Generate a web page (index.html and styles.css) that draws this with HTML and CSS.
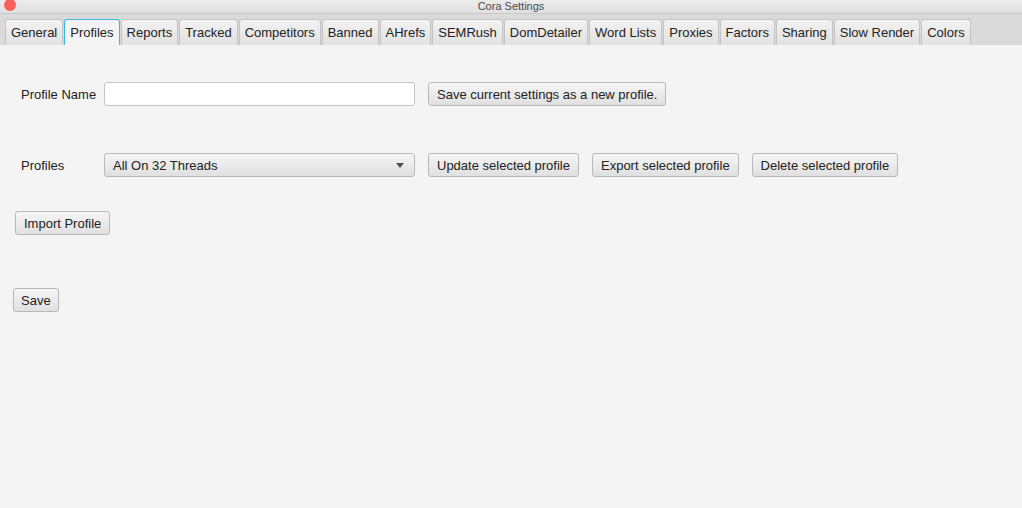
FILE: index.html
```html
<!DOCTYPE html>
<html lang="en">
<head>
    <meta charset="utf-8" />
    <title>Cora Settings</title>
    <link rel="stylesheet" href="styles.css">
</head>
<body>

    <div id="window">

        <div id="titleBar">
            <span class="closeDot"></span>
            <span class="titleText">Cora Settings</span>
        </div>

        <div id="tabBar">
            <div class="tab">General</div>
            <div class="tab selected">Profiles</div>
            <div class="tab">Reports</div>
            <div class="tab">Tracked</div>
            <div class="tab">Competitors</div>
            <div class="tab">Banned</div>
            <div class="tab">AHrefs</div>
            <div class="tab">SEMRush</div>
            <div class="tab">DomDetailer</div>
            <div class="tab">Word Lists</div>
            <div class="tab">Proxies</div>
            <div class="tab">Factors</div>
            <div class="tab">Sharing</div>
            <div class="tab">Slow Render</div>
            <div class="tab">Colors</div>
        </div>

        <div id="contents">

            <div class="formRow rowName">
                <label class="fieldLabel">Profile Name</label>
                <input class="textField" type="text" />
                <button class="btn">Save current settings as a new profile.</button>
            </div>

            <div class="formRow rowProfiles">
                <label class="fieldLabel">Profiles</label>
                <div class="combo">
                    <span>All On 32 Threads</span>
                    <span class="comboArrow"></span>
                </div>
                <button class="btn">Update selected profile</button>
                <button class="btn">Export selected profile</button>
                <button class="btn">Delete selected profile</button>
            </div>

            <div class="formRow rowImport">
                <button class="btn">Import Profile</button>
            </div>

            <div class="formRow rowSave">
                <button class="btn btnSmall">Save</button>
            </div>

        </div>

    </div>

</body>
</html>
```

FILE: styles.css
```css
html, body {
    margin: 0;
    padding: 0;
    width: 100%;
    height: 100%;
    background-color: #F4F4F4;
    font-family: 'Liberation Sans', Arial, sans-serif;
    font-size: 13px;
    color: #222222;
    overflow: hidden;
}

#window {
    display: flex;
    flex-direction: column;
    height: 100%;
}

#titleBar {
    position: relative;
    height: 13px;
    background: linear-gradient(#ECECEC, #DFDFDF);
    border-bottom: 1px solid #CACACA;
    text-align: center;
    font-size: 11px;
    line-height: 13px;
    color: #4A4A4A;
}

.closeDot {
    position: absolute;
    left: 4px;
    top: -1px;
    width: 12px;
    height: 12px;
    border-radius: 50%;
    background-color: #FC5F57;
}

#tabBar {
    display: flex;
    gap: 1px;
    height: 26px;
    padding: 5px 0 0 5px;
    background-color: #DADADA;
}

.tab {
    display: flex;
    align-items: center;
    padding: 0 5px;
    height: 25px;
    white-space: nowrap;
    border: 1px solid #C4C4C4;
    border-bottom: 0;
    border-radius: 3px 3px 0 0;
    background: linear-gradient(#F2F2F2, #E1E1E1);
    color: #222222;
}

.tab.selected {
    background: #F4F4F4;
    border: 1px solid #39B9E3;
    border-bottom: 0;
}

#contents {
    flex: 1;
    display: flex;
    flex-direction: column;
}

.formRow {
    display: flex;
    align-items: center;
    gap: 13px;
}

.rowName {
    margin-top: 37px;
    padding-left: 21px;
}

.rowProfiles {
    margin-top: 47px;
    padding-left: 21px;
}

.rowImport {
    margin-top: 34px;
    padding-left: 15px;
}

.rowSave {
    margin-top: 53px;
    padding-left: 13px;
}

.fieldLabel {
    flex-shrink: 0;
    width: 70px;
    white-space: nowrap;
    color: #222222;
}

.textField {
    box-sizing: border-box;
    width: 311px;
    height: 24px;
    margin: 0;
    border: 1px solid #C4C4C4;
    border-radius: 3px;
    background-color: #FFFFFF;
    font: inherit;
}

.combo {
    box-sizing: border-box;
    display: flex;
    align-items: center;
    justify-content: space-between;
    width: 311px;
    height: 24px;
    padding: 0 8px 0 8px;
    border: 1px solid #B8B8B8;
    border-radius: 3px;
    background: linear-gradient(#F5F5F5, #E0E0E0);
}

.comboArrow {
    width: 0;
    height: 0;
    margin-right: 2px;
    border-left: 4px solid transparent;
    border-right: 4px solid transparent;
    border-top: 5px solid #4D4D4D;
}

.btn {
    box-sizing: border-box;
    flex-shrink: 0;
    height: 24px;
    margin: 0;
    padding: 0 8px;
    border: 1px solid #B8B8B8;
    border-radius: 3px;
    background: linear-gradient(#F6F6F6, #E0E0E0);
    font: inherit;
    color: #222222;
}

.btnSmall {
    padding: 0 7px;
}
```
